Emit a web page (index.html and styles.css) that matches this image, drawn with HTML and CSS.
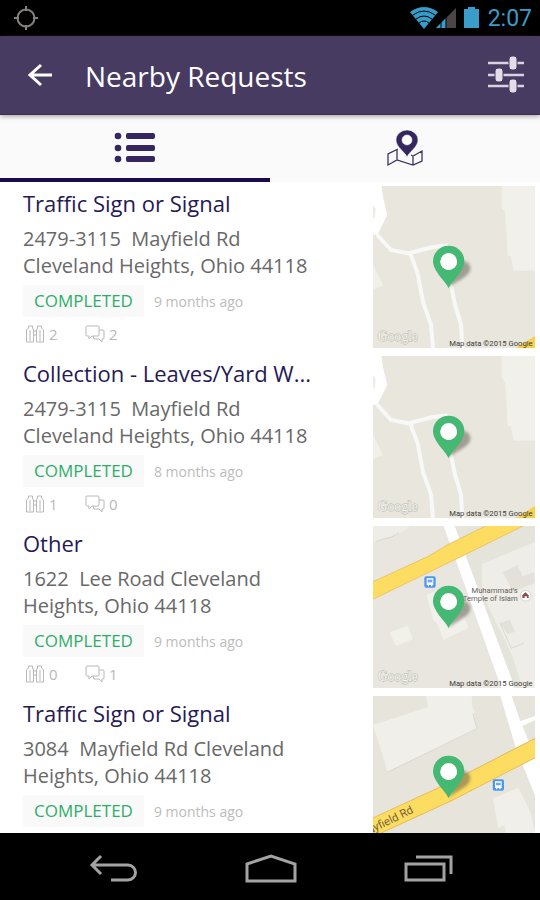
FILE: index.html
```html
<!DOCTYPE html>
<html lang="en">
<head>
<meta charset="utf-8">
<meta name="viewport" content="width=device-width, initial-scale=1">
<title>Nearby Requests</title>
<link rel="stylesheet" href="styles.css">
</head>
<body>
<svg class="defs" width="0" height="0" aria-hidden="true">
  <defs>
    <filter id="soft" x="-50%" y="-50%" width="200%" height="200%"><feGaussianBlur stdDeviation="5"/></filter>
    <symbol id="pin" viewBox="24 19 486 486">
      <path d="M252 325C275 302 320 290 316 262C313 246 296 240 280 246Z" fill="#5c5648" opacity=".5" filter="url(#soft)"/>
      <path fill-rule="evenodd" d="M251 326C244 306 204 276 204 244A47 46 0 0 1 298 244C298 276 258 306 251 326ZM251 221A25 25 0 1 0 251 271A25 25 0 1 0 251 221Z" fill="#45b973"/>
      <circle cx="251" cy="246" r="25" fill="#fff"/>
    </symbol>
    <symbol id="bus" viewBox="0 0 36 36">
      <rect x="1" y="1" width="34" height="34" rx="6" fill="#4b98f0"/>
      <path d="M8 7h20v20h-3v4h-4v-4h-6v4h-4v-4H8z" fill="#fff"/>
      <path d="M11 11h14v8H11z" fill="#6aa9f0"/>
    </symbol>
    <symbol id="lot" viewBox="24 19 486 486">
      <path fill="#e8e6dd" d="M24 19h486v486H24z"/>
      <path fill="#f1f0ea" d="M410 19h100v254H445l-7-44h-10l-8-132-10-12z"/>
      <path fill="#f1f0ea" d="M24 252l30 65-30 12z"/>
      <path fill="#fff" d="M24 19h25l6 38 12 48-30 60H24z"/>
      <path fill="#eeece6" d="M24 76l8 12-2 22-6 9z"/>
      <path d="M36 165l42 46 52 10 70-18 48-6M136 222l22 60 16 85 24 68 6 70M258 315l12 60 18 60 4 70" fill="none" stroke="#f8f8f8" stroke-width="12"/>
      <path fill="#f7d04c" d="M452 505l58-36v36z"/>
    </symbol>
    <symbol id="binoculars" viewBox="0 0 18 18">
      <path d="M.5 17V5l2-2V1h4v2l1 2v12zM10.500 17V5l1-2V1h4v2l2 2v12zM7.500 6h3M7.500 10h3M4 5v11M14 5v11" fill="none" stroke="currentColor"/>
    </symbol>
    <symbol id="chat" viewBox="0 0 20 18">
      <path d="M2 1h11q1 0 1 1v8q0 1-1 1H7l-3 3v-3H2q-1 0-1-1V2q0-1 1-1zM14 5h4q1 0 1 1v7q0 1-1 1h-1v3l-3-3H9l-1-3" fill="none" stroke="currentColor"/>
    </symbol>
  </defs>
</svg>

<div class="status-bar">
  <svg class="gps" viewBox="0 0 24 24" aria-hidden="true"><circle cx="12" cy="12" r="8.500"/><path d="M12 0v5M12 19v5M0 12h5M19 12h5"/></svg>
  <div class="status-icons">
    <svg width="70" height="24" viewBox="0 0 70 24" aria-hidden="true">
      <path d="M14 23L0 6Q14-4 28 6z" fill="#369cc8"/>
      <path d="M3 9Q14 1 25 9M6 13Q14 7 22 13M9 17Q14 13 19 17" fill="none" stroke="#000" stroke-width="1"/>
      <path d="M46 2v20H26z" fill="#4b4547"/><path d="M36 12v10H26z" fill="#369cc8"/>
      <path d="M31 16v6M36 11v11" stroke="#000"/>
      <path d="M54 3h4V1h7v2h4v19H54z" fill="#3a9cc8"/>
    </svg>
    <span class="clock">2:07</span>
  </div>
</div>

<header class="app-bar">
  <button class="icon-button" type="button" aria-label="Back">
    <svg width="24" height="24" viewBox="0 0 24 24" fill="none" stroke="#fff" stroke-width="3"><path d="M24 12H3M13 2L2 12l11 10"/></svg>
  </button>
  <h1>Nearby Requests</h1>
  <button class="icon-button" type="button" aria-label="Filters">
    <svg width="36" height="38" viewBox="0 0 36 38"><path d="M0 7h36M0 19h36M0 30h36" stroke="#d9d2e0" stroke-width="2.500"/><g fill="#e3dde8" stroke="#473b62" stroke-width="1"><rect x="21" y="0" width="8" height="14" rx="3"/><rect x="7" y="12" width="8" height="14" rx="3"/><rect x="21" y="23" width="8" height="14" rx="3"/></g></svg>
  </button>
</header>

<nav class="tabs" aria-label="Views">
  <button class="tab tab-active" type="button" aria-label="List">
    <svg width="42" height="32" viewBox="0 0 42 32" fill="#35265f"><circle cx="4" cy="4" r="3.300"/><circle cx="4" cy="16" r="3.300"/><circle cx="4" cy="27" r="3.300"/><rect x="12" y="1" width="29" height="6" rx="2"/><rect x="12" y="13" width="29" height="6" rx="2"/><rect x="12" y="24" width="29" height="6" rx="2"/></svg>
  </button>
  <button class="tab" type="button" aria-label="Map">
    <svg width="36" height="38" viewBox="0 0 36 38"><path d="M11 20L1 25v11l9-5 16 5 9-4V22l-9 5-2-1M10 21v10M26 27v9" fill="none" stroke="#3c3262" stroke-width="1.300"/><path fill-rule="evenodd" d="M20 28C18 23 9 18 9 11a11 10 0 0 1 22 0C31 18 22 23 20 28ZM20 6a5 5 0 1 0 0 10a5 5 0 1 0 0-10Z" fill="#35265f" stroke="#fafafa" stroke-width=".5"/></svg>
  </button>
</nav>

<main class="requests">
  <article class="request">
    <div class="details">
      <h2>Traffic Sign or Signal</h2>
      <p class="address">2479-3115&nbsp; Mayfield Rd<br>Cleveland Heights, Ohio 44118</p>
      <div class="state"><span class="badge">COMPLETED</span><span class="age">9 months ago</span></div>
      <div class="stats"><span><svg><use href="#binoculars"/></svg>2</span><span><svg><use href="#chat"/></svg>2</span></div>
    </div>
    <svg class="map" viewBox="24 19 486 486" role="img" aria-label="Map">
      <use href="#lot" x="24" y="19" width="486" height="486"/>
      <text class="logo" x="38" y="483">Google</text><text class="credit" x="503" y="499">Map data ©2015 Google</text>
      <use href="#pin" x="24" y="19" width="486" height="486"/>
    </svg>
  </article>

  <article class="request">
    <div class="details">
      <h2>Collection - Leaves/Yard W...</h2>
      <p class="address">2479-3115&nbsp; Mayfield Rd<br>Cleveland Heights, Ohio 44118</p>
      <div class="state"><span class="badge">COMPLETED</span><span class="age">8 months ago</span></div>
      <div class="stats"><span><svg><use href="#binoculars"/></svg>1</span><span><svg><use href="#chat"/></svg>0</span></div>
    </div>
    <svg class="map" viewBox="24 19 486 486" role="img" aria-label="Map">
      <use href="#lot" x="24" y="19" width="486" height="486"/>
      <text class="logo" x="38" y="483">Google</text><text class="credit" x="503" y="499">Map data ©2015 Google</text>
      <use href="#pin" x="24" y="19" width="486" height="486"/>
    </svg>
  </article>

  <article class="request">
    <div class="details">
      <h2>Other</h2>
      <p class="address">1622&nbsp; Lee Road Cleveland<br>Heights, Ohio 44118</p>
      <div class="state"><span class="badge">COMPLETED</span><span class="age">9 months ago</span></div>
      <div class="stats"><span><svg><use href="#binoculars"/></svg>0</span><span><svg><use href="#chat"/></svg>1</span></div>
    </div>
    <svg class="map" viewBox="24 19 486 486" role="img" aria-label="Map">
      <path fill="#e8e6df" d="M24 19h486v486H24z"/>
      <path fill="#e4e4db" d="M240 19l200 486h70V19z"/>
      <path fill="#efede7" d="M24 19h112l-28 20-84 28zM352 132l158-65v220l-110 38-48-105z"/>
      <path fill="#efede7" d="M400 320l110-42v227h-38l-12-40-18-56z"/>
      <path fill="#e3e1da" d="M413 158l45-22 14 34 34-12 4 32-66 26zM405 310l30-10 14 36-20 8z"/>
      <path fill="#f1f0eb" d="M74 338l54-20 16 40-52 22zM184 226l35-15 30 60 50 20 11 35-75 34-18-48-12-10z"/>
      <path d="M34 66l27-10 16-2 25-15M405 310l34 76 38-16" fill="none" stroke="#cfcec6" stroke-width="2"/>
      <path fill="#fff" d="M237 19h32l170 456 8 30h-38L236 19z"/>
      <path fill="#fddc62" stroke="#e5b653" stroke-width="2" d="M20 188L190 110L250 74L370 15H482L300 105L20 241Z"/>
      <use href="#bus" x="177" y="169" width="36" height="36"/>
      <circle cx="482" cy="228" r="16" fill="#fff" stroke="#c6c2bd" stroke-width="2"/><path d="M472 235v-8l9-9 10 9v8h-5v-5h-7v5z" fill="#8d4a4b"/>
      <text class="place" x="458" y="219">Muhammad's</text><text class="place" x="458" y="244">Temple of Islam</text>
      <text class="logo" x="38" y="483">Google</text><text class="credit" x="503" y="499">Map data ©2015 Google</text>
      <use href="#pin" x="24" y="19" width="486" height="486"/>
    </svg>
  </article>

  <article class="request">
    <div class="details">
      <h2>Traffic Sign or Signal</h2>
      <p class="address">3084&nbsp; Mayfield Rd Cleveland<br>Heights, Ohio 44118</p>
      <div class="state"><span class="badge">COMPLETED</span><span class="age">9 months ago</span></div>
      <div class="stats"><span><svg><use href="#binoculars"/></svg>0</span><span><svg><use href="#chat"/></svg>0</span></div>
    </div>
    <svg class="map" viewBox="24 19 486 486" role="img" aria-label="Map">
      <path fill="#e6e4db" d="M24 19h486v486H24z"/>
      <path fill="#f0efe9" d="M24 106l166-54-8-33h138l2 32 8 16-6 8 12 42-268 130z"/>
      <path d="M68 247l268-130-12-42 6-6" fill="none" stroke="#d0cfc8" stroke-width="2"/>
      <path fill="#f0efe9" d="M384 326l76-32 38 76 12 60v75h-70l-22-98-18 8z"/>
      <path fill="#fff" d="M406 19h34l26 76 44-16v12l-38 18 38 90v118l-38-93-18-44z"/>
      <path d="M0 424L250 309 530 165" fill="none" stroke="#e5b653" stroke-width="54"/>
      <path d="M0 424L250 309 530 165" fill="none" stroke="#fddc62" stroke-width="49"/>
      <text class="road" transform="translate(-12 446) rotate(-26)">Mayfield Rd</text>
      <use href="#bus" x="382" y="268" width="36" height="36"/>
      <use href="#pin" x="24" y="19" width="486" height="486"/>
    </svg>
  </article>
</main>

<footer class="system-nav">
  <button type="button" aria-label="System back"><svg width="48" height="28" viewBox="0 0 48 28"><path d="M12 2L3 11l9 9M3 11h36a7 7 0 0 1 0 15H22"/></svg></button>
  <button type="button" aria-label="Home"><svg width="52" height="30" viewBox="0 0 52 30"><path d="M2 11l24-8 24 8v17H2z"/></svg></button>
  <button type="button" aria-label="Recent apps"><svg width="50" height="28" viewBox="0 0 50 28"><path d="M2 10h38v16H2zM12 3h35v17"/></svg></button>
</footer>
</body>
</html>
```

FILE: styles.css
```css
* { box-sizing: border-box; }

body {
  margin: 0;
  height: 100vh;
  display: flex;
  flex-direction: column;
  background: #fff;
  font-family: "Open Sans", "Noto Sans", sans-serif;
}

h1, h2, p { margin: 0; font-weight: 400; }

button {
  padding: 0;
  border: 0;
  background: none;
  font: inherit;
  cursor: pointer;
}

svg { display: block; flex: none; }

.defs { position: absolute; }

.status-bar {
  flex: none;
  height: 36px;
  padding: 0 8px 0 14px;
  display: flex;
  align-items: center;
  justify-content: space-between;
  background: #000;
}

.gps {
  width: 24px;
  height: 24px;
  fill: none;
  stroke: #85817e;
  stroke-width: 2;
}

.status-icons {
  display: flex;
  align-items: center;
  gap: 8px;
}

.clock {
  padding-top: 2px;
  color: #3a9cc8;
  font-family: Roboto, sans-serif;
  font-size: 23px;
  line-height: 34px;
}

.app-bar {
  flex: none;
  height: 79px;
  padding: 0 16px 0 28px;
  display: flex;
  align-items: center;
  background: #473b62;
  border-bottom: 1px solid #3b3056;
  box-shadow: 0 1px 5px rgba(60, 55, 40, 0.5);
  z-index: 1;
}

.app-bar h1 {
  flex: 1;
  margin-left: 33px;
  padding-top: 2px;
  color: #fff;
  font-size: 28px;
  line-height: 40px;
}

.tabs {
  flex: none;
  height: 67px;
  display: grid;
  grid-template-columns: 1fr 1fr;
  background: #fafafa;
}

.tab {
  display: flex;
  align-items: center;
  justify-content: center;
  padding-top: 3px;
  border-bottom: 4px solid transparent;
}

.tab-active { border-bottom-color: #1a0a4f; }

.requests {
  flex: 1;
  min-height: 0;
  overflow-y: auto;
  scrollbar-width: none;
}

.request {
  display: flex;
  justify-content: space-between;
  padding: 4px 5px 4px 23px;
}

.details { padding-top: 2px; }

.details h2 {
  color: #261955;
  font-size: 22px;
  line-height: 30px;
}

.address {
  margin-top: 7px;
  color: #686868;
  font-size: 20px;
  line-height: 27px;
}

.state {
  margin-top: 6px;
  display: flex;
  align-items: center;
  gap: 10px;
}

.badge {
  padding: 0 11px;
  background: #f9f9f9;
  color: #2eae6a;
  font-size: 17px;
  font-weight: 500;
  line-height: 32px;
}

.age { color: #bcbcbc; font-size: 14px; }

.stats {
  margin-top: 8px;
  padding-left: 2px;
  display: flex;
  color: #b8b8b8;
  font-size: 15px;
  line-height: 18px;
}

.stats span {
  width: 60px;
  display: flex;
  gap: 4px;
}

.stats svg { width: 20px; height: 18px; }

.map { width: 162px; height: 162px; }

.map text { font-family: Roboto, sans-serif; }

.map .logo {
  fill: #f6f5f0;
  stroke: #b9b8b2;
  stroke-width: 3px;
  paint-order: stroke;
  font-family: "Liberation Serif", serif;
  font-size: 41px;
}

.map .credit {
  fill: #3c3c38;
  font-size: 23px;
  text-anchor: end;
}

.map .place {
  fill: #665e5b;
  font-size: 23px;
  text-anchor: end;
}

.map .road {
  fill: #77633a;
  font-size: 34px;
}

.system-nav {
  flex: none;
  height: 67px;
  padding: 2px 86px 0 89px;
  display: flex;
  align-items: center;
  justify-content: space-between;
  background: #000;
}

.system-nav svg {
  fill: none;
  stroke: #a3a3a3;
  stroke-width: 3;
}
```
